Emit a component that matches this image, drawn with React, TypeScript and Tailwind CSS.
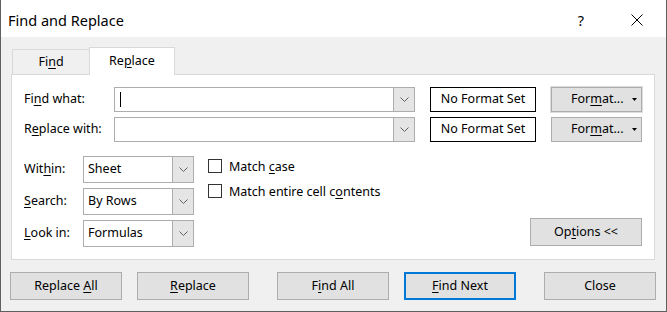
import React from "react";

const U = ({ children }: { children: React.ReactNode }) => (
  <span className="underline underline-offset-[2px] decoration-1">{children}</span>
);

const Chevron = () => (
  <svg width="9" height="6" viewBox="0 0 9 6" fill="none">
    <polyline points="0.5,0.5 4.5,4.5 8.5,0.5" stroke="#606060" strokeWidth="1" />
  </svg>
);

type ComboProps = {
  className: string;
  value?: string;
  caret?: boolean;
};

const Combo = ({ className, value, caret }: ComboProps) => (
  <div className={`flex border border-[#adadad] bg-white ${className}`}>
    <div className="flex-1 flex items-center pl-[4px]">
      {caret && <div className="ml-[1px] w-px h-[15px] bg-black" />}
      {value}
    </div>
    <div className="w-[21px] bg-[#e5e5e5] border-l border-[#adadad] flex items-center justify-center">
      <Chevron />
    </div>
  </div>
);

const Btn = ({ children, focus }: { children: React.ReactNode; focus?: boolean }) => (
  <div
    className={`h-[28px] w-[112px] bg-[#e1e1e1] flex items-center justify-center ${
      focus ? "border-2 border-[#0078d7]" : "border border-[#adadad]"
    }`}
  >
    <span className="pt-[1px]">{children}</span>
  </div>
);

const FormatBtn = ({ halo }: { halo?: boolean }) => (
  <div
    className={`ml-[15px] h-[25px] w-[91px] bg-[#e1e1e1] border border-[#adadad] flex items-center justify-between pl-[19px] pr-[4px] ${
      halo ? "outline outline-1 outline-[#dcdcdc]" : ""
    }`}
  >
    <span>
      For<U>m</U>at...
    </span>
    <svg width="5" height="3" viewBox="0 0 5 3">
      <polygon points="0,0 5,0 2.5,3" fill="#000" />
    </svg>
  </div>
);

const NoFormat = () => (
  <div className="ml-[15px] h-[25px] w-[106px] border border-black bg-white flex items-center justify-center">
    No Format Set
  </div>
);

const Check = ({ children }: { children: React.ReactNode }) => (
  <div className="h-[18px] flex items-center">
    <div className="w-[14px] h-[14px] border border-[#333333] bg-white" />
    <span className="ml-[7px] pt-[2px]">{children}</span>
  </div>
);

export default function App() {
  return (
    <div className="w-[667px] h-[312px] bg-[#f0f0f0] border-l border-r border-b border-[#5f5f5f] flex flex-col text-[12.5px] text-black font-['Noto_Sans',sans-serif] leading-none">
      {/* title bar */}
      <div className="h-[37px] shrink-0 bg-white flex items-center pl-[7px] pr-[23px] pt-[3px]">
        <span className="text-[14.5px]">Find and Replace</span>
        <span className="ml-auto text-[14.5px]">?</span>
        <svg className="ml-[47px]" width="12" height="12" viewBox="0 0 12 12">
          <path d="M0.5 0.5 L11.5 11.5 M11.5 0.5 L0.5 11.5" stroke="#000" strokeWidth="1" />
        </svg>
      </div>

      {/* tabs */}
      <div className="flex items-end pt-[10px] pl-[11px] shrink-0">
        <div className="h-[26px] w-[78px] border-t border-l border-r border-[#d9d9d9] bg-[#f0f0f0] flex items-center justify-center">
          Fi<U>n</U>d
        </div>
        <div className="relative z-10 -ml-px h-[28px] w-[86px] border-t border-l border-r border-[#d9d9d9] bg-white flex items-center justify-center pb-[1px]">
          Re<U>p</U>lace
        </div>
      </div>

      {/* panel */}
      <div className="-mt-px ml-[10px] w-[644px] h-[186px] shrink-0 bg-white border border-[#d9d9d9] px-[12px] pt-[12px] pb-[12px] flex flex-col">
        <div className="flex items-center h-[25px]">
          <div className="w-[90px]">
            Fi<U>n</U>d what:
          </div>
          <Combo className="w-[301px] h-[25px]" caret />
          <NoFormat />
          <FormatBtn halo />
        </div>
        <div className="flex items-center h-[25px] mt-[5px]">
          <div className="w-[90px]">
            R<U>e</U>place with:
          </div>
          <Combo className="w-[301px] h-[25px]" />
          <NoFormat />
          <FormatBtn />
        </div>

        <div className="flex mt-[14px] flex-1">
          <div className="flex flex-col gap-[5px]">
            <div className="flex items-center h-[27px]">
              <div className="w-[59px]">
                Wit<U>h</U>in:
              </div>
              <Combo className="w-[111px] h-[27px]" value="Sheet" />
            </div>
            <div className="flex items-center h-[27px]">
              <div className="w-[59px]">
                <U>S</U>earch:
              </div>
              <Combo className="w-[111px] h-[27px]" value="By Rows" />
            </div>
            <div className="flex items-center h-[27px]">
              <div className="w-[59px]">
                <U>L</U>ook in:
              </div>
              <Combo className="w-[111px] h-[27px]" value="Formulas" />
            </div>
          </div>

          <div className="ml-[14px] pt-[1px] flex flex-col gap-[7px]">
            <Check>
              Match <U>c</U>ase
            </Check>
            <Check>
              Match entire cell c<U>o</U>ntents
            </Check>
          </div>

          <div className="flex-1 flex justify-end items-end pb-[1px]">
            <Btn>
              Op<U>t</U>ions &lt;&lt;
            </Btn>
          </div>
        </div>
      </div>

      {/* bottom buttons */}
      <div className="flex mt-[12px] ml-[9px]">
        <Btn>
          Replace <U>A</U>ll
        </Btn>
        <div className="ml-[15px]">
          <Btn>
            <U>R</U>eplace
          </Btn>
        </div>
        <div className="ml-[28px]">
          <Btn>
            F<U>i</U>nd All
          </Btn>
        </div>
        <div className="ml-[15px]">
          <Btn focus>
            <U>F</U>ind Next
          </Btn>
        </div>
        <div className="ml-[28px]">
          <Btn>Close</Btn>
        </div>
      </div>
    </div>
  );
}
